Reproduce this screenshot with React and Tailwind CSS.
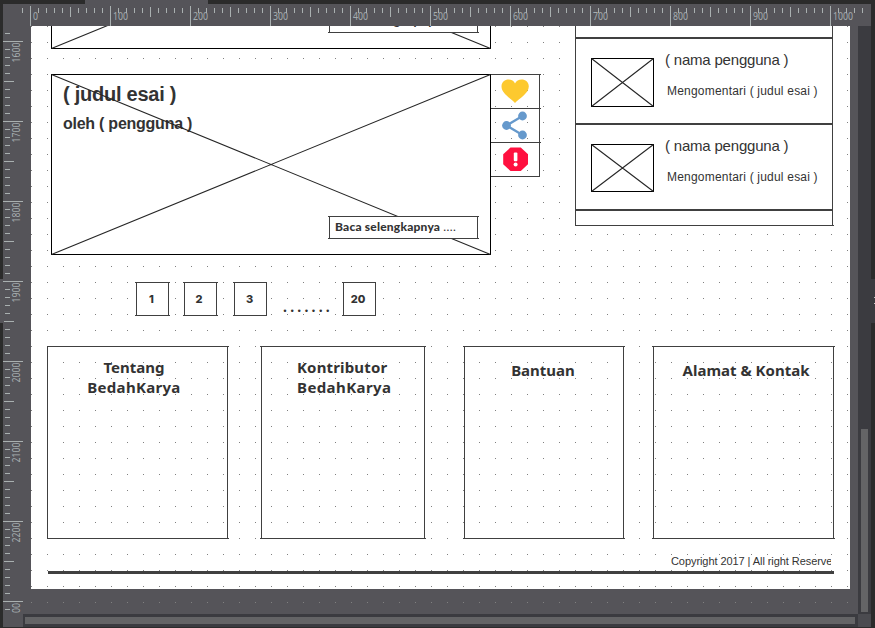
import clsx from "clsx";

const ARIAL = "font-['Liberation_Sans',Arial,sans-serif]";
const ROUND = "font-['Noto_Sans',sans-serif] font-bold text-[15px] leading-5";

// Stencil rectangle; its horizontal strokes may run one pixel past the corners.
function Frame({ className, left, right, children }) {
  const edge = clsx("absolute h-px bg-[#404040]", left ? "-left-0.5" : "-left-px", right ? "-right-0.5" : "-right-px");
  return (
    <div className={clsx("relative shrink-0 border border-[#404040]", className)}>
      <span className={clsx(edge, "-top-px")} />
      <span className={clsx(edge, "-bottom-px")} />
      {children}
    </div>
  );
}

function Cross({ w, h }) {
  return (
    <svg className="absolute -left-px -top-px" width={w} height={h}>
      <path d={`M0.5 0.5L${w - 0.5} ${h - 0.5}M0.5 ${h - 0.5}L${w - 0.5} 0.5`} stroke="#262626" strokeWidth="1.1" />
    </svg>
  );
}

function TopRuler() {
  const ticks = Array.from({ length: 106 }, (_, k) => k - 1);
  return (
    <svg className="block h-[22px] w-[868px] shrink-0 bg-[#555459]" viewBox="3 4 868 22" shapeRendering="crispEdges">
      {ticks.map((k) => {
        const major = k % 10 === 0;
        const mid = !major && k % 5 === 0;
        return (
          <rect key={k} x={30 + 8 * k} y={major ? 6 : mid ? 7 : 8} width="1" height={major ? 20 : mid ? 10 : 5} fill="#a9b0b0" />
        );
      })}
      {Array.from({ length: 11 }, (_, i) => (
        <text key={i} x={33 + 80 * i} y="20" fontSize="10" textLength={i === 0 ? 5 : i === 10 ? 20 : 15} lengthAdjust="spacingAndGlyphs" fill="#a5adb0" className="font-['Noto_Sans',sans-serif]">
          {i * 100}
        </text>
      ))}
    </svg>
  );
}

function LeftRuler() {
  return (
    <svg className="block h-[588px] w-[28px] shrink-0 bg-[#555459]" viewBox="3 26 28 588" shapeRendering="crispEdges">
      {Array.from({ length: 74 }, (_, i) => i - 2).map((k) => {
        const major = k % 10 === 0;
        const mid = !major && k % 5 === 0;
        return <rect key={k} x={major ? 3 : mid ? 4 : 5} y={41 + 8 * k} width={major ? 20 : mid ? 10 : 5} height="1" fill="#a9b0b0" />;
      })}
      {["1600", "1700", "1800", "1900", "2000", "2100", "2200", "00"].map((t, i) => (
        <text key={i} transform={`translate(20 ${80 * i + (t.length === 2 ? 53 : 62.5)}) rotate(-90)`} fontSize="10" textLength={t.length * 5} lengthAdjust="spacingAndGlyphs" fill="#a5adb0" className="font-['Noto_Sans',sans-serif]">
          {t}
        </text>
      ))}
    </svg>
  );
}

function Essay() {
  return (
    <div className="relative h-[181px] w-[440px] shrink-0 border border-black bg-white pl-[11px] pt-[7px] text-[#333]">
      <Cross w={440} h={181} />
      <h2 className={clsx(ARIAL, "text-[20px] font-bold leading-6 tracking-[-0.25px]")}>( judul esai )</h2>
      <p className={clsx(ARIAL, "mt-2 text-[16px] font-bold leading-5 tracking-[-0.25px]")}>oleh ( pengguna )</p>
      <Frame left right className="ml-[266px] mt-[82px] h-[23px] w-[149px] bg-white pl-[5px]">
        <p className="whitespace-nowrap font-['Lato',sans-serif] text-[12px] leading-[19px]">
          <span className="font-black tracking-[0.2px]">Baca selengkapnya</span> <span className="tracking-[0.4px]">....</span>
        </p>
      </Frame>
    </div>
  );
}

function Action({ last, children }) {
  return (
    <div className={clsx("relative w-[49px] border-r border-t border-[#404040]", last ? "h-[35px] border-b" : "h-[34px]")}>
      <span className="absolute -right-0.5 -top-px size-px bg-[#404040]" />
      {children}
    </div>
  );
}

function Actions() {
  return (
    <div className="flex flex-col pt-[48px]">
      <Action>
        <svg className="block" width="48" height="33" viewBox="491 75 48 33">
          <path d="M515 103C511 98.5 501.5 93.5 501.5 86.5C501.5 82 505 79.6 508.5 79.6C511.5 79.6 514 81.2 515 83.6C516.2 81.2 518.7 79.6 521.7 79.6C525.3 79.6 528.8 82 528.8 86.5C528.8 93.5 519 98.5 515 103Z" fill="#fdc92f" />
        </svg>
      </Action>
      <Action>
        <svg className="block" width="48" height="33" viewBox="491 109 48 33" fill="#6699cc">
          <path d="M522.5 116L506.5 125.5L522.5 135" fill="none" stroke="#6699cc" strokeWidth="2.2" />
          <circle cx="522.5" cy="116" r="4.4" />
          <circle cx="506.5" cy="125.5" r="4.4" />
          <circle cx="522.5" cy="135" r="4.4" />
        </svg>
      </Action>
      <Action last>
        <svg className="block" width="48" height="33" viewBox="491 143 48 33">
          <path d="M510.5 147.5H520.8L528 154.3V164.2L520.8 171H510.5L503.2 164.2V154.3Z" fill="#ff103f" />
          <rect x="513.8" y="152.5" width="3.6" height="8.7" rx="1" fill="white" />
          <circle cx="515.6" cy="164.4" r="2" fill="white" />
        </svg>
      </Action>
    </div>
  );
}

function Comment({ thumb, h }) {
  return (
    <div className="flex h-[86px] border-t-2 border-[#404040] pl-[15px] text-[#333]">
      <div className={clsx("relative mt-[19px] w-[63px] border border-black", thumb)}>
        <Cross w={63} h={h} />
      </div>
      <div className={clsx(ARIAL, "whitespace-nowrap pl-[11px] pt-3")}>
        <p className="text-[15px] leading-[18px] tracking-[-0.2px]">( nama pengguna )</p>
        <p className="mt-[14px] pl-[2px] text-[12px] leading-4 tracking-[0.2px]">Mengomentari ( judul esai )</p>
      </div>
    </div>
  );
}

function Sidebar() {
  return (
    <aside className="relative ml-[35px] h-[200px] w-[258px] border-x border-b border-[#404040] bg-white">
      <div className="h-[11px]" />
      <Comment thumb="h-[49px]" h={49} />
      <Comment thumb="h-[48px]" h={48} />
      <div className="h-4 border-t-2 border-[#404040]" />
      <span className="absolute -bottom-px -right-0.5 size-px bg-[#404040]" />
    </aside>
  );
}

function PageButton({ className = "pr-[2px]", left, right, children }) {
  return (
    <Frame left={left} right={right} className={clsx("flex h-[34px] w-[33px] items-center justify-center bg-white font-['Inter',sans-serif] text-[11px] font-extrabold text-[#333]", className)}>
      {children}
    </Frame>
  );
}

function Pager() {
  return (
    <nav className="mt-[27px] flex h-[34px] pl-[105px]">
      <PageButton left right>1</PageButton>
      <PageButton left right className="ml-[15px] pr-[3px]">2</PageButton>
      <PageButton left className="ml-[17px] pr-[2px]">3</PageButton>
      <span className="w-[76px] pl-[16px] pt-[15px] font-['Noto_Sans',sans-serif] text-[14px] font-bold leading-5 tracking-[3.2px] text-[#333]">.......</span>
      <PageButton left className="pr-[3px]">20</PageButton>
    </nav>
  );
}

function FooterCards() {
  return (
    <div className={clsx(ROUND, "mt-[30px] flex h-[193px] pl-4 text-[#333]")}>
      <Frame right className="w-[181px] pr-[7px] pt-[10px] text-center">
        <p>Tentang</p>
        <p className="tracking-[0.3px]">BedahKarya</p>
      </Frame>
      <Frame left right className="ml-[33px] w-[164px] pl-[35px] pt-[10px]">
        <p className="tracking-[0.15px]">Kontributor</p>
        <p className="tracking-[0.4px]">BedahKarya</p>
      </Frame>
      <Frame left right className="ml-[39px] w-[160px] pr-[2px] pt-[13px] text-center">
        <p>Bantuan</p>
      </Frame>
      <Frame left right className="ml-[29px] w-[181px] pl-[5px] pt-[13px] text-center">
        <p>Alamat &amp; Kontak</p>
      </Frame>
    </div>
  );
}

function GridDots() {
  return (
    <svg className="absolute left-0 top-0" width="827" height="588" shapeRendering="crispEdges">
      <defs>
        <pattern id="grid" width="16" height="16" patternUnits="userSpaceOnUse">
          <rect width="1" height="1" fill="#808080" />
        </pattern>
      </defs>
      <rect width="827" height="588" fill="url(#grid)" />
    </svg>
  );
}

function Canvas() {
  return (
    <div className="relative isolate h-[588px] w-[827px] shrink-0 overflow-hidden bg-[#555459]">
      <div className="h-[563px] w-[819px] bg-white">
        <GridDots />
        <div className="relative flex flex-col">
          <div className="flex h-[229px] items-start pl-5">
            <div className="flex flex-col gap-[25px]">
              <div className="flex h-[23px] flex-col justify-end overflow-hidden">
                <Essay />
              </div>
              <Essay />
            </div>
            <Actions />
            <Sidebar />
          </div>
          <Pager />
          <FooterCards />
          <p className={clsx(ARIAL, "ml-[640px] mt-[14px] w-[160px] overflow-hidden whitespace-nowrap text-[11px] leading-4 tracking-[-0.07px] text-[#333]")}>
            Copyright 2017 | All right Reserved
          </p>
          <div className="ml-[17px] mt-0.5 h-[3px] w-[786px] bg-[#404040]" />
        </div>
      </div>
    </div>
  );
}

export default function App() {
  return (
    <div className="flex h-[628px] w-[875px] flex-col overflow-hidden bg-[#2b2b2b]">
      <div className="flex h-1 shrink-0 pl-[85px]">
        <div className="w-[123px] bg-[#555459]" />
      </div>
      <div className="flex min-h-0 grow">
        <div className="w-[3px] shrink-0 pt-[275px]">
          <div className="h-[44px] bg-[#555459]" />
        </div>
        <div className="flex w-[868px] shrink-0 flex-col">
          <TopRuler />
          <div className="flex">
            <LeftRuler />
            <Canvas />
            <div className="w-[13px] bg-[#3b3b40] pl-[3px] pt-[403px]">
              <div className="h-[183px] w-[7px] bg-[#646466]" />
            </div>
          </div>
          <div className="flex h-[13px]">
            <div className="w-[20px] bg-[#555459]" />
            <div className="grow bg-[#3b3b40] pl-[2px] pt-[3px]">
              <div className="h-[7px] w-[830px] bg-[#646466]" />
            </div>
            <div className="w-[13px] bg-[#4b4b50]" />
          </div>
        </div>
        <div className="w-[4px] shrink-0 pt-[275px]">
          <div className="flex h-[44px] flex-col items-end gap-[5px] bg-[#3b3b40] pt-[18px]">
            <span className="size-px bg-[#c0c0c0]" />
            <span className="size-px bg-[#c0c0c0]" />
          </div>
        </div>
      </div>
    </div>
  );
}
